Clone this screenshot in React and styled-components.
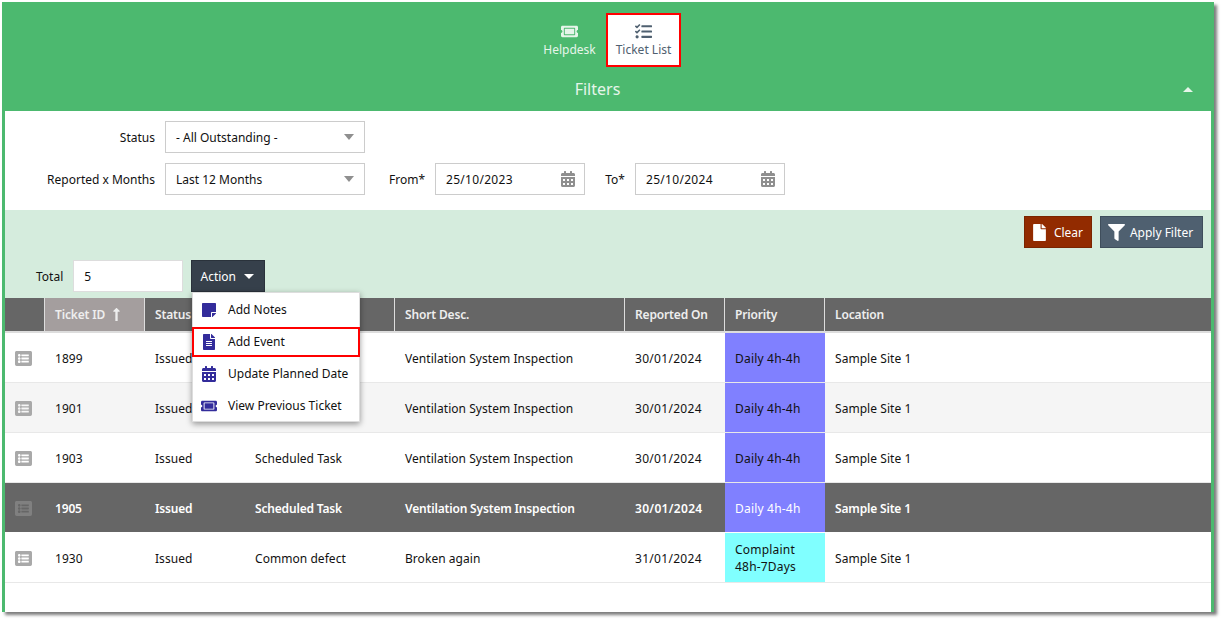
import React from "react";
import styled, { createGlobalStyle } from "styled-components";
import {
  FaTicketAlt,
  FaTasks,
  FaStickyNote,
  FaFileAlt,
  FaCalendarAlt,
  FaFilter,
  FaFile,
  FaListAlt,
  FaLongArrowAltUp,
} from "react-icons/fa";

const GlobalStyle = createGlobalStyle`
  html, body {
    margin: 0;
    padding: 0;
    min-height: 619px;
    background: #fff;
    font-family: "Noto Sans", "DejaVu Sans", sans-serif;
    font-size: 12px;
    color: #111;
  }
  * { box-sizing: border-box; }
`;

const Frame = styled.div`
  width: 1212px;
  height: 610px;
  margin: 2px 0 0 2px;
  border-left: 3px solid #4cb96f;
  border-right: 3px solid #4cb96f;
  background: #fff;
  box-shadow: 3px 3px 3px #7c7c7c;
  position: relative;
`;

const TopBar = styled.div`
  height: 109px;
  background: #4cb96f;
  display: flex;
  flex-direction: column;
  align-items: center;
  padding-top: 11px;
`;

const Nav = styled.nav`
  display: flex;
  justify-content: center;
  gap: 0;
  height: 54px;
  margin-left: -2px;
`;

const NavItem = styled.div`
  width: ${({ $w }) => $w}px;
  display: flex;
  flex-direction: column;
  align-items: center;
  padding-top: 8px;
  gap: 1px;
  color: ${({ $active }) => ($active ? "#4f6070" : "#e6f5ea")};
  background: ${({ $active }) => ($active ? "#fff" : "transparent")};
  border: ${({ $active }) => ($active ? "2px solid #f00" : "2px solid transparent")};
  svg { font-size: 17px; }
`;

const FilterTitle = styled.div`
  width: 100%;
  height: 44px;
  padding-right: 21px;
  display: flex;
  align-items: center;
  justify-content: center;
  position: relative;
  color: #e6f5ea;
  font-size: 16px;
`;

const CollapseArrow = styled.span`
  position: absolute;
  right: 18px;
  top: 20px;
  border-left: 5px solid transparent;
  border-right: 5px solid transparent;
  border-bottom: 5px solid #e6f5ea;
`;

const FilterPanel = styled.div`
  height: 99px;
  padding-top: 10px;
  display: flex;
  flex-direction: column;
  gap: 10px;
`;

const FilterRow = styled.div`
  display: flex;
  align-items: center;
  height: 32px;
`;

const FilterLabel = styled.label`
  width: ${({ $w }) => $w}px;
  text-align: right;
  padding-right: 10px;
  flex: none;
`;

const Field = styled.div`
  width: ${({ $w }) => $w}px;
  height: 32px;
  flex: none;
  border: 1px solid #ccc;
  background: #fff;
  display: flex;
  align-items: center;
  justify-content: space-between;
  padding: 0 8px 0 10px;
  svg { color: #8f8f8f; font-size: 16px; }
`;

const DateText = styled.span`
  letter-spacing: 0.3px;
`;

const SelectCaret = styled.span`
  border-left: 5px solid transparent;
  border-right: 5px solid transparent;
  border-top: 6px solid #8f8f8f;
  margin-right: 2px;
`;

const ActionPanel = styled.div`
  height: 88px;
  background: #d5ecdd;
  padding: 6px 8px 0 31px;
`;

const ButtonRow = styled.div`
  display: flex;
  justify-content: flex-end;
  gap: 8px;
  height: 32px;
  margin-bottom: 12px;
`;

const Btn = styled.button`
  width: ${({ $w }) => $w}px;
  height: 32px;
  padding: 0 2px 0 0;
  display: flex;
  align-items: center;
  justify-content: center;
  gap: ${({ $gap }) => $gap}px;
  font: inherit;
  color: #fff;
  background: ${({ $bg }) => $bg};
  border: 1px solid ${({ $edge }) => $edge};
  svg { font-size: 17px; }
`;

const TotalRow = styled.div`
  display: flex;
  align-items: center;
  gap: 10px;
  height: 32px;
`;

const TotalInput = styled(Field)`
  border-color: #ddd;
`;

const ActionButton = styled(Btn)`
  margin-left: -2px;
`;

const WhiteCaret = styled.span`
  border-left: 5px solid transparent;
  border-right: 5px solid transparent;
  border-top: 5px solid #fff;
`;

const Menu = styled.div`
  position: absolute;
  left: 187px;
  top: 290px;
  width: 168px;
  background: #fff;
  border: 1px solid #ddd;
  box-shadow: 0 2px 6px rgba(0, 0, 0, 0.4);
  z-index: 2;
`;

const MenuItem = styled.div`
  height: 30px;
  display: flex;
  align-items: center;
  padding: 0 0 1px 7px;
  border: ${({ $active }) => ($active ? "2px solid #f00" : "2px solid transparent")};
  margin: 2px -1px 0;
`;

const MenuIcon = styled.span`
  width: 27px;
  flex: none;
  display: flex;
  color: #332c9b;
  svg { font-size: 16px; }
`;

const Grid = styled.div`
  display: grid;
  grid-template-columns: 39px 100px 100px 150px 230px 100px 100px 1fr;
`;

const HeadRow = styled(Grid)`
  height: 35px;
  background: #666;
  border-bottom: 2px solid #ddd;
  background-clip: padding-box;
`;

const HeadCell = styled.div`
  display: flex;
  align-items: center;
  gap: 4px;
  padding-left: 10px;
  color: #eee;
  font-weight: 600;
  letter-spacing: -0.15px;
  border-left: ${({ $first }) => ($first ? "0" : "1px solid #ddd")};
  background: ${({ $sorted }) => ($sorted ? "#a49e9e" : "transparent")};
  svg { font-size: 15px; }
`;

const Row = styled(Grid)`
  height: 50px;
  border-bottom: 1px solid ${({ $selected }) => ($selected ? "#fff" : "#e8e8e8")};
  color: ${({ $selected }) => ($selected ? "#fff" : "#111")};
  font-weight: ${({ $selected }) => ($selected ? 600 : 400)};
  letter-spacing: ${({ $selected }) => ($selected ? "-0.17px" : "0.05px")};
  background: ${({ $selected, $alt }) => ($selected ? "#666" : $alt ? "#f5f5f5" : "#fff")};
`;

const Cell = styled.div`
  display: flex;
  align-items: center;
  padding: 2px 0 0 11px;
`;

const DateCell = styled(Cell)`
  letter-spacing: 0.3px;
`;

const RowIcon = styled(Cell)`
  padding-left: 10px;
  color: ${({ $selected }) => ($selected ? "#808080" : "#a9a9a9")};
  svg { font-size: 17px; }
`;

const PriorityCell = styled(Cell)`
  margin-left: 1px;
  margin-right: -1px;
  padding: 1px 20px 0 10px;
  line-height: 17px;
  font-weight: 400;
  letter-spacing: 0.2px;
  color: ${({ $selected }) => ($selected ? "#fff" : "#111")};
  background: ${({ $color }) => $color};
`;

const rows = [
  { id: "1899", type: "Scheduled Task", desc: "Ventilation System Inspection", date: "30/01/2024", priority: "Daily 4h-4h", color: "#8080ff" },
  { id: "1901", type: "Scheduled Task", desc: "Ventilation System Inspection", date: "30/01/2024", priority: "Daily 4h-4h", color: "#8080ff", alt: true },
  { id: "1903", type: "Scheduled Task", desc: "Ventilation System Inspection", date: "30/01/2024", priority: "Daily 4h-4h", color: "#8080ff" },
  { id: "1905", type: "Scheduled Task", desc: "Ventilation System Inspection", date: "30/01/2024", priority: "Daily 4h-4h", color: "#8080ff", selected: true },
  { id: "1930", type: "Common defect", desc: "Broken again", date: "31/01/2024", priority: "Complaint 48h-7Days", color: "#80ffff" },
];

const menuItems = [
  { label: "Add Notes", icon: <FaStickyNote /> },
  { label: "Add Event", icon: <FaFileAlt />, active: true },
  { label: "Update Planned Date", icon: <FaCalendarAlt /> },
  { label: "View Previous Ticket", icon: <FaTicketAlt /> },
];

const App = () => (
  <>
    <GlobalStyle />
    <Frame>
      <TopBar>
        <Nav>
          <NavItem $w={73}>
            <FaTicketAlt />
            <span>Helpdesk</span>
          </NavItem>
          <NavItem $w={75} $active>
            <FaTasks />
            <span>Ticket List</span>
          </NavItem>
        </Nav>
        <FilterTitle>
          Filters
          <CollapseArrow />
        </FilterTitle>
      </TopBar>

      <FilterPanel>
        <FilterRow>
          <FilterLabel $w={160}>Status</FilterLabel>
          <Field $w={200}>
            - All Outstanding -
            <SelectCaret />
          </Field>
        </FilterRow>
        <FilterRow>
          <FilterLabel $w={160}>Reported x Months</FilterLabel>
          <Field $w={200}>
            Last 12 Months
            <SelectCaret />
          </Field>
          <FilterLabel $w={70}>From*</FilterLabel>
          <Field $w={150}>
            <DateText>25/10/2023</DateText>
            <FaCalendarAlt />
          </Field>
          <FilterLabel $w={50}>To*</FilterLabel>
          <Field $w={150}>
            <DateText>25/10/2024</DateText>
            <FaCalendarAlt />
          </Field>
        </FilterRow>
      </FilterPanel>

      <ActionPanel>
        <ButtonRow>
          <Btn $w={68} $gap={6} $bg="#922b00" $edge="#7a2400">
            <FaFile />
            Clear
          </Btn>
          <Btn $w={103} $gap={5} $bg="#4f6070" $edge="#3f4e5c">
            <FaFilter />
            Apply Filter
          </Btn>
        </ButtonRow>
        <TotalRow>
          <span>Total</span>
          <TotalInput $w={110}>5</TotalInput>
          <ActionButton $w={74} $gap={8} $bg="#36404b" $edge="#2a323b">
            Action
            <WhiteCaret />
          </ActionButton>
        </TotalRow>
      </ActionPanel>

      <HeadRow>
        <HeadCell $first />
        <HeadCell $sorted>
          Ticket ID
          <FaLongArrowAltUp />
        </HeadCell>
        <HeadCell>Status</HeadCell>
        <HeadCell>Type</HeadCell>
        <HeadCell>Short Desc.</HeadCell>
        <HeadCell>Reported On</HeadCell>
        <HeadCell>Priority</HeadCell>
        <HeadCell>Location</HeadCell>
      </HeadRow>

      {rows.map((r) => (
        <Row key={r.id} $alt={r.alt} $selected={r.selected}>
          <RowIcon $selected={r.selected}>
            <FaListAlt />
          </RowIcon>
          <Cell>{r.id}</Cell>
          <Cell>Issued</Cell>
          <Cell>{r.type}</Cell>
          <Cell>{r.desc}</Cell>
          <DateCell>{r.date}</DateCell>
          <PriorityCell $color={r.color} $selected={r.selected}>
            {r.priority}
          </PriorityCell>
          <Cell>Sample Site 1</Cell>
        </Row>
      ))}

      <Menu>
        {menuItems.map((m) => (
          <MenuItem key={m.label} $active={m.active}>
            <MenuIcon>{m.icon}</MenuIcon>
            {m.label}
          </MenuItem>
        ))}
      </Menu>
    </Frame>
  </>
);

export default App;
